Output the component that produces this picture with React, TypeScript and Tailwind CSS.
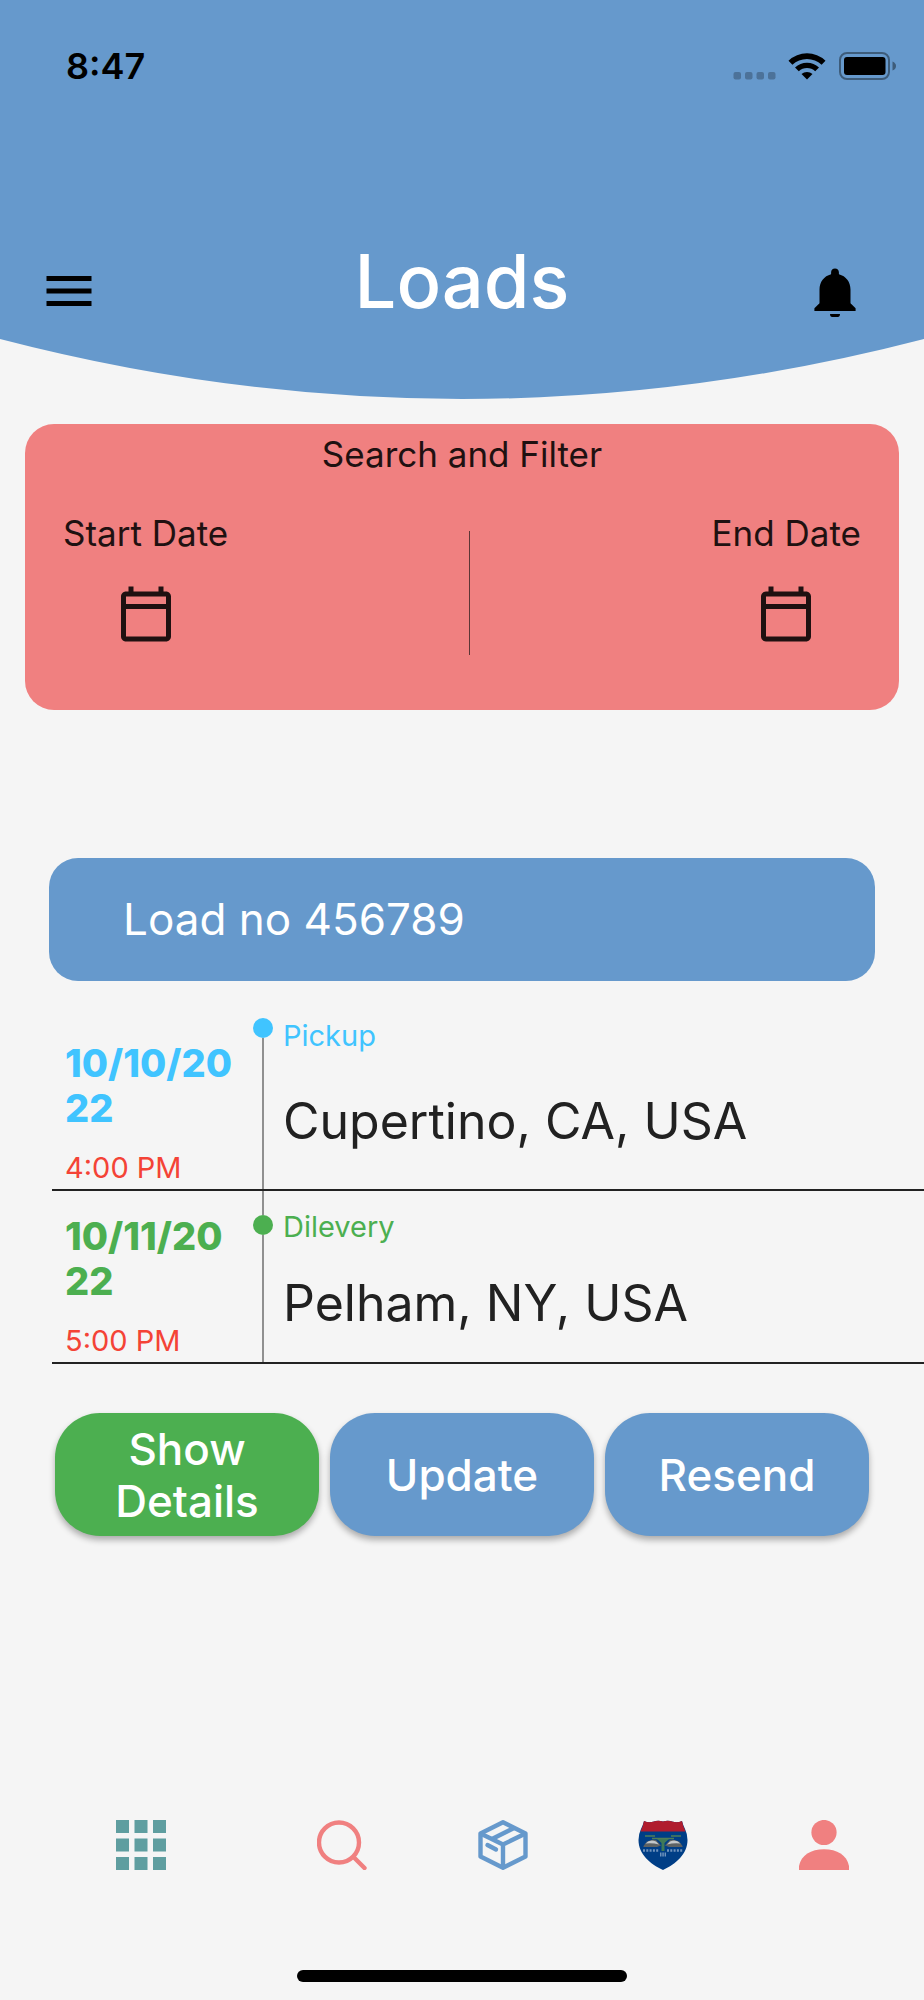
import { useState } from "react";

type Stop = {
  kind: "pickup" | "delivery";
  label: string;
  date: string;
  time: string;
  city: string;
};

type Load = {
  id: number;
  stops: Stop[];
};

const load: Load = {
  id: 456789,
  stops: [
    { kind: "pickup", label: "Pickup", date: "10/10/2022", time: "4:00 PM", city: "Cupertino, CA, USA" },
    { kind: "delivery", label: "Dilevery", date: "10/11/2022", time: "5:00 PM", city: "Pelham, NY, USA" },
  ],
};

function StatusBar() {
  return (
    <div className="flex h-[132px] items-center justify-between pl-[66px] pr-[28px] text-black">
      <span className="text-[36px] font-semibold leading-[44px]">8:47</span>
      <svg width="164" height="28" viewBox="0 0 164 28" aria-hidden="true">
        <g fillOpacity="0.25">
          <rect x="1.5" y="20" width="7.5" height="7.5" rx="2" />
          <rect x="13" y="20" width="7.5" height="7.5" rx="2" />
          <rect x="24.5" y="20" width="7.5" height="7.5" rx="2" />
          <rect x="36" y="20" width="7.5" height="7.5" rx="2" />
        </g>
        <path d="M56.5 8.7 A27 27 0 0 1 93.5 8.7 L89.6 12.8 A21 21 0 0 0 60.4 12.8 Z" />
        <path d="M63 15.4 A17.6 17.6 0 0 1 87 15.4 L83.2 19.3 A12 12 0 0 0 66.8 19.3 Z" />
        <path d="M69.5 22 A8.2 8.2 0 0 1 80.5 22 L75 27.5 Z" />
        <rect x="108" y="1" width="49" height="26" rx="7" fill="none" stroke="#000" strokeOpacity="0.4" strokeWidth="2" />
        <rect x="112" y="5" width="41.5" height="18" rx="3" />
        <path d="M160.5 9.5 Q164 11 164 14 Q164 17 160.5 18.5 Z" fillOpacity="0.4" />
      </svg>
    </div>
  );
}

function Header() {
  return (
    <header>
      <div className="bg-[#6699cc] pb-[18px]">
        <StatusBar />
        <div className="mt-[109px] grid grid-cols-[1fr_auto_1fr] items-end px-[39px]">
          <button type="button" aria-label="Open menu" className="justify-self-start">
            <svg width="60" height="60" viewBox="0 0 24 24" aria-hidden="true">
              <path d="M3 18h18v-2H3v2zm0-5h18v-2H3v2zm0-7v2h18V6H3z" />
            </svg>
          </button>
          <h1 className="text-[74px] font-medium leading-[80px] text-white">Loads</h1>
          <button type="button" aria-label="Notifications" className="mr-5 justify-self-end">
            <svg width="60" height="60" viewBox="0 0 60 60" aria-hidden="true">
              <path d="M30 7.5 C32.3 7.5 33.9 9 33.9 11.2 V13.3 C41 15.2 45.5 21 45.5 28.5 V42.3 L50.6 47.2 V50 H9.4 V47.2 L14.5 42.3 V28.5 C14.5 21 19 15.2 26.1 13.3 V11.2 C26.1 9 27.7 7.5 30 7.5 Z" />
              <path d="M25 53 H35 C35 54.8 34.2 56 32.8 56 H27.2 C25.8 56 25 54.8 25 53 Z" />
            </svg>
          </button>
        </div>
      </div>
      <svg className="block h-[60px] w-full" viewBox="0 0 100 60" preserveAspectRatio="none" aria-hidden="true">
        <path d="M0 0 Q50 120 100 0 Z" fill="#6699cc" />
      </svg>
    </header>
  );
}

function DateButton({ label, active, onClick }: { label: string; active: boolean; onClick: () => void }) {
  return (
    <button type="button" aria-pressed={active} onClick={onClick} className="flex flex-col items-center gap-[29px]">
      <span className="text-[35px] leading-[44px]">{label}</span>
      <svg width="60" height="60" viewBox="0 0 24 24" fill="currentColor" aria-hidden="true">
        <path d="M20 3h-1V1h-2v2H7V1H5v2H4c-1.1 0-2 .9-2 2v16c0 1.1.9 2 2 2h16c1.1 0 2-.9 2-2V5c0-1.1-.9-2-2-2zm0 2v3H4V5h16zM4 21V10h16v11H4z" />
      </svg>
    </button>
  );
}

function SearchFilter() {
  const [picker, setPicker] = useState<"start" | "end" | null>(null);

  return (
    <section className="mx-[25px] mt-[25px] rounded-[29px] bg-[#f08080] px-[38px] pb-[66px] pt-[8px] text-[#1f1111]">
      <h2 className="text-center text-[35px] leading-[44px]">Search and Filter</h2>
      <div className="mt-[35px] flex items-stretch justify-between">
        <DateButton label="Start Date" active={picker === "start"} onClick={() => setPicker("start")} />
        <div className="-mb-[11px] mt-[20px] w-px bg-[#5c3636]" />
        <DateButton label="End Date" active={picker === "end"} onClick={() => setPicker("end")} />
      </div>
    </section>
  );
}

function StopRow({ stop }: { stop: Stop }) {
  const isPickup = stop.kind === "pickup";
  const color = isPickup ? "text-[#40c4ff]" : "text-[#4caf50]";
  const dot = isPickup ? "bg-[#40c4ff]" : "bg-[#4caf50]";

  return (
    <li className="flex border-b-2 border-[#222222]">
      <div className="w-[201px] pb-[3px] pl-[13px] pr-[14px] pt-[23px]">
        <p className={`break-all text-[38px] font-extrabold leading-[45px] ${color}`}>{stop.date}</p>
        <p className="mt-[19px] text-[29px] leading-[36px] text-[#f44336]">{stop.time}</p>
      </div>
      <div className="flex w-5 flex-col items-center">
        {!isPickup && <div className="h-6 w-[2px] bg-[#909090]" />}
        <div className={`size-5 rounded-full ${dot}`} />
        <div className="w-[2px] flex-1 bg-[#909090]" />
      </div>
      <div className={`flex flex-1 flex-col justify-between pl-[10px] ${isPickup ? "pb-[38px]" : "pb-[29px] pt-[18px]"}`}>
        <p className={`text-[29px] leading-[36px] ${color}`}>{stop.label}</p>
        <p className="text-[50px] leading-[60px] text-[#212121]">{stop.city}</p>
      </div>
    </li>
  );
}

function LoadActions() {
  const base =
    "flex h-[123px] flex-1 items-center justify-center rounded-[45px] px-6 text-center text-[44px] font-medium leading-[52px] text-white shadow-[0_4px_6px_rgba(0,0,0,0.3)]";
  return (
    <div className="mt-[49px] flex gap-[11px] px-[55px]">
      <button type="button" className={`${base} bg-[#4caf50]`}>Show Details</button>
      <button type="button" className={`${base} bg-[#6699cc]`}>Update</button>
      <button type="button" className={`${base} bg-[#6699cc]`}>Resend</button>
    </div>
  );
}

function GridIcon() {
  return (
    <svg width="50" height="50" viewBox="0 0 50 50" fill="#5f9ea0" aria-hidden="true">
      {[0, 18.5, 37].map((y) =>
        [0, 18.5, 37].map((x) => <rect key={`${x}-${y}`} x={x} y={y} width="13" height="13" />)
      )}
    </svg>
  );
}

function SearchIcon() {
  return (
    <svg width="50" height="50" viewBox="0 0 50 50" fill="none" stroke="#f08080" strokeWidth="4.4" aria-hidden="true">
      <circle cx="22" cy="22.5" r="20" />
      <path d="M36.5 37 L47.5 48" strokeLinecap="round" />
    </svg>
  );
}

function BoxIcon() {
  return (
    <svg width="50" height="50" viewBox="0 0 50 50" fill="none" stroke="#6699cc" strokeWidth="4.4" strokeLinejoin="round" aria-hidden="true">
      <path d="M25 2.3 L47.5 13.5 V36.5 L25 47.7 L2.5 36.5 V13.5 Z" />
      <path d="M2.5 13.5 L25 24.5 L47.5 13.5 M25 24.5 V47.5" />
      <path d="M14 19 L36 8" />
      <path d="M9.5 25 L18 29.5" strokeLinecap="round" />
    </svg>
  );
}

function ShieldIcon() {
  return (
    <svg width="50" height="50" viewBox="0 0 50 50" aria-hidden="true">
      <path d="M6 1 Q10.5 3 15 1.8 Q20 0 25 1.6 Q30 0 35 1.8 Q39.5 3 44 1 Q45 5 47 9 Q49.5 14 49.5 20 C49.5 34 38 44 25 50 C12 44 0.5 34 0.5 20 Q0.5 14 3 9 Q5 5 6 1 Z" fill="#003e86" />
      <path d="M6 1 Q10.5 3 15 1.8 Q20 0 25 1.6 Q30 0 35 1.8 Q39.5 3 44 1 Q44.8 6 47.5 11.5 H2.5 Q5.2 6 6 1 Z" fill="#b01c2e" />
      <path d="M7 16 H17 M14 18.5 H36 M33 16 H43" stroke="#4f7d57" strokeWidth="1.5" />
      <path d="M5.5 26 Q10 18.5 18 20 L23 25.5 L19 27 H5.5 Z" fill="#5d6264" />
      <path d="M44.5 26 Q40 18.5 32 20 L27 25.5 L31 27 H44.5 Z" fill="#5d6264" />
      <path d="M7.5 23.5 Q12 19 18 21.5 L21 24.5 Q14 22.5 7.5 23.5 Z" fill="#c3c7ca" />
      <path d="M42.5 23.5 Q38 19 32 21.5 L29 24.5 Q36 22.5 42.5 23.5 Z" fill="#c3c7ca" />
      <path d="M19 19 H31 L26.5 23 V31 H23.5 V23 Z" fill="#3f7a57" />
      <path d="M5 30.5 H21 M29 30.5 H45" stroke="#6f93bd" strokeWidth="2.5" strokeDasharray="2 1.3" />
      <path d="M22 34.5 H28" stroke="#6f93bd" strokeWidth="4" strokeDasharray="1.5 0.8" />
    </svg>
  );
}

function PersonIcon() {
  return (
    <svg width="50" height="50" viewBox="0 0 50 50" fill="#f08080" aria-hidden="true">
      <circle cx="25" cy="12.5" r="12.6" />
      <path d="M0 50 V46 C2 35 12 29.2 25 29.2 C38 29.2 48 35 50 46 V50 Z" />
    </svg>
  );
}

function BottomNav() {
  return (
    <nav className="flex justify-between pb-[100px] pl-[116px] pr-[75px]">
      <a href="#dashboard" aria-label="Dashboard" className="mr-10"><GridIcon /></a>
      <a href="#search" aria-label="Search"><SearchIcon /></a>
      <a href="#loads" aria-label="Loads"><BoxIcon /></a>
      <a href="#routes" aria-label="Routes"><ShieldIcon /></a>
      <a href="#profile" aria-label="Profile"><PersonIcon /></a>
    </nav>
  );
}

export default function App() {
  return (
    <div className="flex min-h-screen flex-col bg-[#f5f5f5] font-['Inter','Liberation_Sans',sans-serif]">
      <Header />
      <main className="flex-1">
        <SearchFilter />
        <section className="mt-[148px]">
          <h2 className="mx-[49px] rounded-[29px] bg-[#6699cc] py-[34px] pl-[74px] pr-6 text-[44px] leading-[55px] text-white">
            Load no {load.id}
          </h2>
          <ul className="ml-[52px] mt-[37px]">
            {load.stops.map((stop) => (
              <StopRow key={stop.kind} stop={stop} />
            ))}
          </ul>
          <LoadActions />
        </section>
      </main>
      <BottomNav />
      <div className="mx-auto mb-[18px] h-[12px] w-[330px] rounded-full bg-black" />
    </div>
  );
}
